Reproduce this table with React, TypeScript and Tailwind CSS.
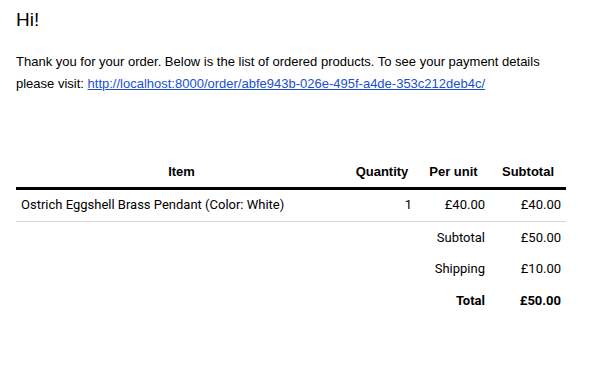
import React from "react";

const rows = [
  { item: "Ostrich Eggshell Brass Pendant (Color: White)", qty: "1", unit: "£40.00", sub: "£40.00" },
];

const totals = [
  { label: "Subtotal", value: "£50.00", bold: false },
  { label: "Shipping", value: "£10.00", bold: false },
  { label: "Total", value: "£50.00", bold: true },
];

export default function App() {
  return (
    <div className="w-[590px] h-[365px] bg-white px-4 text-black font-['Liberation_Sans',Arial,sans-serif]">
      <h1 className="pt-[9px] text-[19px] leading-[22px] font-normal">Hi!</h1>
      <p className="mt-[20px] text-[13px] leading-[22px]">
        Thank you for your order. Below is the list of ordered products. To see your payment details
        please visit:{" "}
        <a href="#" className="text-[#1a4fd1] underline">
          http://localhost:8000/order/abfe943b-026e-495f-a4de-353c212deb4c/
        </a>
      </p>

      <table className="mt-[61px] w-[550px] border-collapse table-fixed">
        <colgroup>
          <col className="w-[331px]" />
          <col className="w-[70px]" />
          <col className="w-[73px]" />
          <col className="w-[76px]" />
        </colgroup>
        <thead>
          <tr className="border-b-[3px] border-black text-[13px] font-bold">
            <th className="h-[32px] px-[5px] text-center">Item</th>
            <th className="px-[5px] text-center">Quantity</th>
            <th className="px-[5px] text-center">Per unit</th>
            <th className="px-[5px] text-center">Subtotal</th>
          </tr>
        </thead>
        <tbody className="font-['Roboto',sans-serif] text-[13px]">
          {rows.map((r, i) => (
            <tr key={i} className="border-b border-[#d6d6d6]">
              <td className="h-[33px] px-[5px] text-left">{r.item}</td>
              <td className="px-[5px] text-right">{r.qty}</td>
              <td className="px-[5px] text-right">{r.unit}</td>
              <td className="px-[5px] text-right">{r.sub}</td>
            </tr>
          ))}
          {totals.map((t) => (
            <tr key={t.label} className={t.bold ? "font-bold" : ""}>
              <td className="h-[32px]" />
              <td />
              <td className="px-[5px] text-right">{t.label}</td>
              <td className="px-[5px] text-right">{t.value}</td>
            </tr>
          ))}
        </tbody>
      </table>
    </div>
  );
}
